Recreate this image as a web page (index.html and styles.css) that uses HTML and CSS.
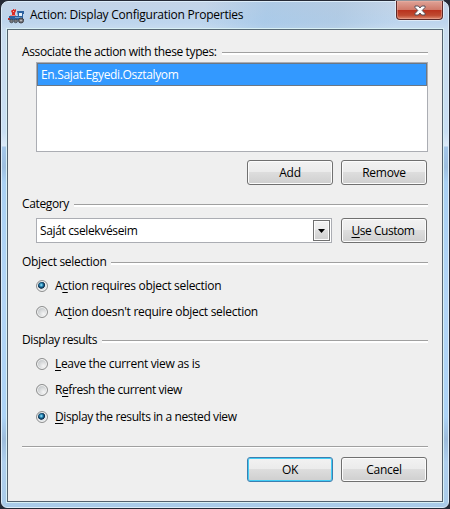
FILE: index.html
```html
<!DOCTYPE html>
<html lang="en">
<head>
<meta charset="utf-8">
<title>Action: Display Configuration Properties</title>
<link rel="stylesheet" href="styles.css">
</head>
<body>
<div class="window">
  <header class="titlebar">
    <svg class="app-icon" width="17" height="16" viewBox="0 0 17 16">
      <path d="M3 3l1-1h1V1h1v1l2-1v2L7 5v3H4V5z" fill="#d92c26"/>
      <path d="M5 3h1v1H5z" fill="#ffb09f"/>
      <path d="M9 3h7v3h-1v5h1v1H1V8h9z" fill="#2c62a0"/>
      <path d="M11 5h3v3h-3z" fill="#e5f1fa"/>
      <path d="M2 7h6v1H2z" fill="#ef817b"/>
      <path d="M7 9h7v1H7z" fill="#6ca0cf"/>
      <path d="M0 10h2v2H0z" fill="#b53030"/>
      <circle cx="3.500" cy="13" r="1.800" fill="#77777b" stroke="#333d48" stroke-width=".7"/>
      <circle cx="7.700" cy="13" r="1.800" fill="#77777b" stroke="#333d48" stroke-width=".7"/>
      <circle cx="13" cy="12.500" r="2.500" fill="#77777b" stroke="#35373d" stroke-width=".9"/>
      <circle cx="13" cy="12.500" r=".8" fill="#d8d8d8"/>
    </svg>
    <h1 class="title">Action: Display Configuration Properties</h1>
    <button class="close" aria-label="Close">
      <svg width="12" height="11" viewBox="0 0 12 11"><path d="M1 1h3.300L6 3l1.700-2H11v1.500L8.200 5.500 11 8.500V10H7.700L6 8l-1.700 2H1V8.500l2.800-3L1 2.500z" fill="#fff" stroke="#57505a" stroke-width="1"/></svg>
    </button>
  </header>
  <main class="client">
    <section class="types">
      <h2 class="heading"><span class="t-types">Associate the action with these types:</span></h2>
      <div class="list"><div class="item"><span class="t-item">En.Sajat.Egyedi.Osztalyom</span></div></div>
      <div class="actions"><button class="btn">Add</button><button class="btn">Remove</button></div>
    </section>
    <section class="category">
      <h2 class="heading"><span class="t-category">Category</span></h2>
      <div class="fields">
        <div class="combo"><span class="t-combo">Saját cselekvéseim</span><span class="drop"><svg width="7" height="4" viewBox="0 0 7 4"><path d="M0 0h7L3.500 4z"/></svg></span></div>
        <button class="btn custom"><span><u>U</u>se Custom</span></button>
      </div>
    </section>
    <section class="selection">
      <h2 class="heading"><span class="t-object">Object selection</span></h2>
      <label class="option"><i class="radio on"></i><span class="t-requires">A<u>c</u>tion requires object selection</span></label>
      <label class="option"><i class="radio"></i><span class="t-not">Ac<u>t</u>ion doesn't require object selection</span></label>
    </section>
    <section class="results">
      <h2 class="heading"><span class="t-results">Display results</span></h2>
      <label class="option"><i class="radio"></i><span class="t-leave"><u>L</u>eave the current view as is</span></label>
      <label class="option"><i class="radio"></i><span class="t-refresh">R<u>e</u>fresh the current view</span></label>
      <label class="option last"><i class="radio on"></i><span class="t-nested"><u>D</u>isplay the results in a nested view</span></label>
    </section>
    <footer class="actions footer"><button class="btn default">OK</button><button class="btn">Cancel</button></footer>
  </main>
</div>
</body>
</html>
```
FILE: styles.css
```css
* { box-sizing: border-box; }
body { margin: 0; background: #252a36; overflow: hidden; }
body, button { font: 12px/18px "Open Sans", "Noto Sans", sans-serif; color: #000; }
h1, h2 { margin: 0; font-size: 12px; font-weight: 400; }
span, h1 { white-space: nowrap; }
u { text-decoration-thickness: 1px; text-underline-offset: 2px; text-decoration-skip-ink: none; }

.window {
  width: 448px; height: 507px; margin: 1px;
  padding: 0 6px 6px;
  border: 1px solid #dcecf9;
  border-radius: 7px 7px 6px 6px;
  background:
    linear-gradient(100deg, transparent 45%, #93bde370 59%, #9abbd960 75%, transparent 88%) 0 0 / 100% 28px no-repeat,
    linear-gradient(#c4d4e7, #bdd5ed 20px, #c9dcef 28px, #c9dff3 130px, #dceaf8 144px, #a4c7e9 145px, #9dbedf 165px, #a9d0f3 180px, #b3d5f6 300px, #acd3f6 415px, #9dbcdc 437px, #afcfed 460px, #a9cbe9);
}
.titlebar { display: flex; height: 27px; align-items: flex-start; }
.app-icon { margin: 6px 5px 0 0; flex: none; }
.title { margin-top: 4px; letter-spacing: -.24px; }
.close {
  display: flex; align-items: center; justify-content: center;
  width: 47px; height: 19px; margin: -1px -1px 0 auto; padding: 0;
  border: 1px solid #5b2929; border-top: 0; border-radius: 0 0 4px 4px;
  background: linear-gradient(#dfa397, #cf7969 49%, #b9301c 50%, #bf4a31 80%, #df8970);
  box-shadow: inset 0 0 0 1px #efb6a970, 0 0 0 1px #ffffff80;
}
.client {
  height: 473px; width: 436px; margin-left: -1px; padding: 13px 14px 0;
  border: 1px solid #53616e; border-top-color: #596b77;
  background: #efefef; box-shadow: 0 0 0 1px #d8f0f5;
}
.heading { display: flex; height: 18px; align-items: center; gap: 5px; }
.heading::after { content: ""; flex: 1; height: 2px; margin-top: 2px; background: #fff; border-top: 1px solid #a0a0a0; }
.list { margin: 1px 0 0 14px; height: 90px; border: 1px solid #abadb3; background: #fff; }
.item { height: 23px; padding: 2px 3px; color: #fff; background: #3399ff; border: 1px solid #6b7785; line-height: 18px; }
.actions { display: flex; justify-content: flex-end; gap: 8px; padding-right: 1px; }
.types .actions { margin-top: 8px; }
.btn {
  width: 86px; height: 25px; padding: 0; flex: none; text-align: center;
  border: 1px solid #707070; border-radius: 3px;
  background: linear-gradient(#f2f2f2, #ebebeb 48%, #dddddd 50%, #cfcfcf);
  box-shadow: inset 0 0 0 1px #fcfcfc; letter-spacing: -.25px;
}
.custom { letter-spacing: -.45px; padding-right: 2px; }
.default { border-color: #3c7fb1; box-shadow: inset 0 0 0 1px #43cdf5; }
.category { margin-top: 10px; }
.fields { display: flex; gap: 9px; margin: 5px 1px 0 14px; }
.combo { width: 296px; height: 25px; border: 1px solid #abadb3; background: #fff; display: flex; align-items: center; padding: 0 1px 0 3px; }
.drop { margin-left: auto; width: 17px; height: 21px; border: 1px solid #707070; background: linear-gradient(#f2f2f2, #ebebeb 48%, #dddddd 50%, #cfcfcf); box-shadow: inset 0 0 0 1px #fcfcfc; display: flex; align-items: center; justify-content: center; }
.selection { margin-top: 10px; }
.results { margin-top: 6px; }
.option { display: flex; align-items: center; height: 26px; margin-left: 14px; gap: 7px; }
.heading + .option { margin-top: 2px; }
.last { margin-top: 1px; }
.radio { width: 12px; height: 12px; border-radius: 50%; border: 1px solid #8e8f8f; background: radial-gradient(circle at 65% 70%, #f6f6f6, #ced1d3 55%, #b2b7bb); box-shadow: inset 0 0 0 1px #f4f4f4; }
.on { background: radial-gradient(circle at 43% 40%, #b5ecfb 0, #3aa0cc 15%, #125078 30%, #102d49 41%, #dfe4e7 48%); }
.footer { margin-top: 16px; padding-top: 10px; border-top: 1px solid #a0a0a0; box-shadow: inset 0 1px #fff; }

.t-types { letter-spacing: -.38px; }
.t-item { letter-spacing: -.34px; }
.t-category, .t-combo { letter-spacing: -.36px; }
.t-object { letter-spacing: -.31px; }
.t-requires { letter-spacing: -.29px; }
.t-not { letter-spacing: -.29px; }
.t-results { letter-spacing: -.43px; }
.t-leave { letter-spacing: -.32px; }
.t-refresh { letter-spacing: -.42px; }
.t-nested { letter-spacing: -.39px; }
```
